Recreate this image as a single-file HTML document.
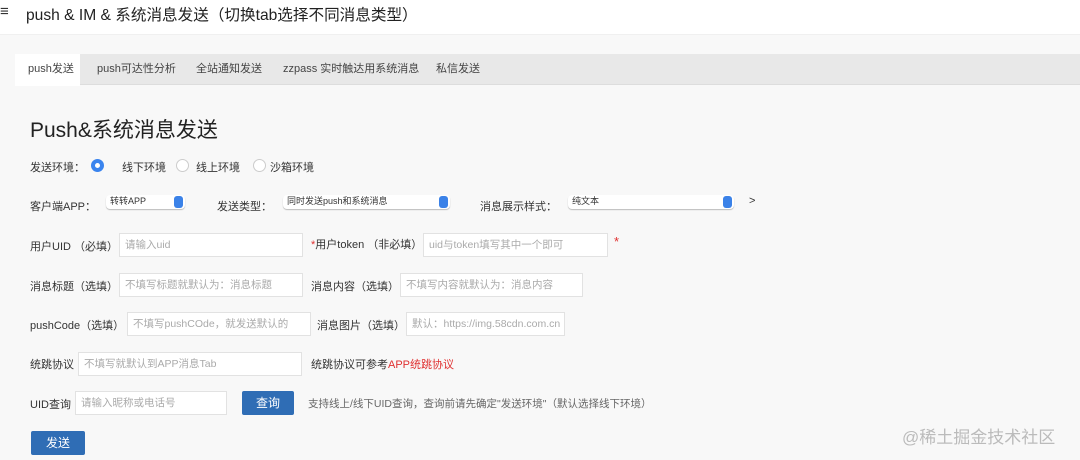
<!DOCTYPE html>
<html><head><meta charset="utf-8"><style>
*{margin:0;padding:0;box-sizing:border-box}
body{width:1080px;height:460px;overflow:hidden;background:#f8f8f8;font-family:"Liberation Sans","Noto Sans CJK SC",sans-serif;color:#333;position:relative}
.a{position:absolute;white-space:nowrap}
.hdr{position:absolute;left:0;top:0;width:1080px;height:35px;background:#fff;border-bottom:1px solid #f0f0f0}
.tabs{position:absolute;left:15px;top:54px;width:1065px;height:31px;background:#e8e8e8;border-bottom:1px solid #ddd}
.tab{position:absolute;top:0;height:31px;line-height:31px;font-size:11px;color:#444}
.lbl{font-size:11px;color:#333}
.in{position:absolute;background:#fff;border:1px solid #e2e2e2;height:24px;font-size:10.5px;color:#aaa;line-height:22px;padding-left:5px;overflow:hidden;white-space:nowrap}
.sel{position:absolute;height:14px;background:#fff;border-radius:4px;box-shadow:0 1px 1px #bbb;font-size:9px;line-height:13px;padding-left:4px;color:#333}
.sel i{position:absolute;right:2px;top:1px;width:9px;height:12px;background:#3b82e8;border-radius:3px}
.radio{position:absolute;width:13px;height:13px;border-radius:50%;border:1px solid #ccc;background:#fff}
.btn{position:absolute;background:#2f6db5;color:#fff;font-size:12px;text-align:center;border-radius:2px}
.req{color:#e03030}
</style></head><body>
<div class="hdr"></div>
<div class="a" style="left:0;top:3px;font-size:15px;color:#333;line-height:18px">≡</div>
<div class="a" style="left:26px;top:3px;font-size:15.6px;color:#222">push &amp; IM &amp; 系统消息发送（切换tab选择不同消息类型）</div>
<div class="tabs">
<div style="position:absolute;left:0;top:0;width:65px;height:32px;background:#fff"></div>
<div class="tab" style="left:13px">push发送</div>
<div class="tab" style="left:82px">push可达性分析</div>
<div class="tab" style="left:181px">全站通知发送</div>
<div class="tab" style="left:268px">zzpass 实时触达用系统消息</div>
<div class="tab" style="left:421px">私信发送</div>
</div>
<div class="a" style="left:30px;top:114px;font-size:21px;color:#222">Push&amp;系统消息发送</div>
<div class="a lbl" style="left:30px;top:159px">发送环境：</div>
<div class="radio" style="left:91px;top:159px;border:4px solid #3a84ee"></div>
<div class="a lbl" style="left:122px;top:159px">线下环境</div>
<div class="radio" style="left:176px;top:159px"></div>
<div class="a lbl" style="left:196px;top:159px">线上环境</div>
<div class="radio" style="left:253px;top:159px"></div>
<div class="a lbl" style="left:270px;top:159px">沙箱环境</div>

<div class="a lbl" style="left:30px;top:198px">客户端APP：</div>
<div class="sel" style="left:106px;top:195px;width:79px">转转APP<i></i></div>
<div class="a lbl" style="left:217px;top:198px">发送类型：</div>
<div class="sel" style="left:283px;top:195px;width:167px">同时发送push和系统消息<i></i></div>
<div class="a lbl" style="left:480px;top:198px">消息展示样式：</div>
<div class="sel" style="left:568px;top:195px;width:166px">纯文本<i></i></div>
<div class="a lbl" style="left:749px;top:195px">&gt;</div>

<div class="a lbl" style="left:30px;top:238px">用户UID （必填）</div>
<div class="in" style="left:119px;top:233px;width:184px">请输入uid</div>
<div class="a lbl" style="left:311px;top:236px"><span class="req">*</span>用户token （非必填）</div>
<div class="in" style="left:423px;top:233px;width:185px">uid与token填写其中一个即可</div>
<div class="a req" style="left:614px;top:234px;font-size:13px">*</div>

<div class="a lbl" style="left:30px;top:278px">消息标题（选填）</div>
<div class="in" style="left:119px;top:273px;width:184px">不填写标题就默认为：消息标题</div>
<div class="a lbl" style="left:311px;top:278px">消息内容（选填）</div>
<div class="in" style="left:400px;top:273px;width:183px">不填写内容就默认为：消息内容</div>

<div class="a lbl" style="left:30px;top:317px">pushCode（选填）</div>
<div class="in" style="left:127px;top:312px;width:184px">不填写pushCOde，就发送默认的</div>
<div class="a lbl" style="left:317px;top:317px">消息图片（选填）</div>
<div class="in" style="left:406px;top:312px;width:159px">默认：https://img.58cdn.com.cn</div>

<div class="a lbl" style="left:30px;top:356px">统跳协议</div>
<div class="in" style="left:78px;top:352px;width:224px">不填写就默认到APP消息Tab</div>
<div class="a lbl" style="left:311px;top:356px">统跳协议可参考<span class="req">APP统跳协议</span></div>

<div class="a lbl" style="left:30px;top:396px">UID查询</div>
<div class="in" style="left:75px;top:391px;width:152px">请输入昵称或电话号</div>
<div class="btn" style="left:242px;top:391px;width:52px;height:24px;line-height:24px">查询</div>
<div class="a" style="left:308px;top:396px;font-size:10.5px;color:#666">支持线上/线下UID查询，查询前请先确定"发送环境"（默认选择线下环境）</div>

<div class="btn" style="left:31px;top:431px;width:54px;height:24px;line-height:24px">发送</div>
<div class="a" style="left:902px;top:423px;font-size:17px;color:#bbb">@稀土掘金技术社区</div>
</body></html>
